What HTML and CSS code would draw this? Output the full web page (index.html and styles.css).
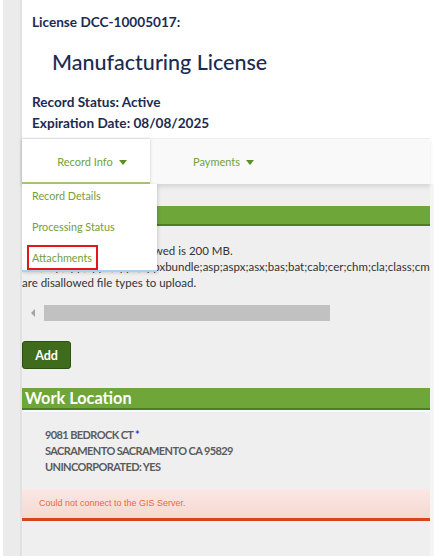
FILE: index.html
```html
<!DOCTYPE html>
<html lang="en">
<head>
<meta charset="utf-8">
<title>Manufacturing License</title>
<link rel="stylesheet" href="styles.css">
</head>
<body>
<div class="page">
  <div class="gutter"></div>
  <div class="main">
    <div class="record-header">
      <div class="license">License DCC-10005017:</div>
      <h1 class="title">Manufacturing License</h1>
      <div class="status">
        <div>Record Status: Active</div>
        <div>Expiration Date: 08/08/2025</div>
      </div>
    </div>
    <nav class="tabs">
      <div class="tab active">Record Info <span class="caret"></span></div>
      <div class="tab">Payments <span class="caret"></span></div>
    </nav>
    <div class="dropdown">
      <div class="dd-item">Record Details</div>
      <div class="dd-item">Processing Status</div>
      <div class="dd-item"><span class="selected">Attachments</span></div>
    </div>
    <div class="content">
      <div class="section-bar"></div>
      <div class="info">
        <div class="line">The maximum file size allowed is 200 MB.</div>
        <div class="line">ade;adp;app;appk;appx;appxbundle;asp;aspx;asx;bas;bat;cab;cer;chm;cla;class;cmd;com;cpl;crt;csh;der;diagcab;exe;fxp;gadget</div>
        <div class="line">are disallowed file types to upload.</div>
      </div>
      <div class="scroller">
        <span class="arrow-left"></span>
        <span class="thumb"></span>
      </div>
      <button class="add-btn" type="button">Add</button>
      <div class="section-bar work">Work Location</div>
      <div class="address">
        <div>9081 BEDROCK CT <span class="req">*</span></div>
        <div>SACRAMENTO SACRAMENTO CA 95829</div>
        <div>UNINCORPORATED: YES</div>
      </div>
      <div class="error">Could not connect to the GIS Server.</div>
    </div>
  </div>
</div>
</body>
</html>
```
FILE: styles.css
```css
html, body {
  margin: 0;
  padding: 0;
  background: #ffffff;
  height: 100%;
}
body {
  font-family: Lato, "Open Sans", sans-serif;
  overflow: hidden;
}
.page {
  display: flex;
  min-height: 556px;
}
.gutter {
  width: 17px;
  margin-left: 3px;
  background: #ebebeb;
  border-right: 2px solid #e1e1e1;
  flex: none;
}
.main {
  flex: 1;
  min-width: 0;
  position: relative;
  display: flex;
  flex-direction: column;
}
.record-header {
  padding: 14px 0 0 10px;
  color: #1b2b52;
}
.license {
  font-size: 13.6px;
  font-weight: 700;
  line-height: 16px;
}
.title {
  margin: 19px 0 0 20px;
  font-size: 21.5px;
  font-weight: 500;
  line-height: 26px;
}
.status {
  margin-top: 17px;
  font-size: 13.6px;
  font-weight: 700;
  line-height: 21px;
}
.tabs {
  margin-top: 4px;
  margin-right: 4px;
  height: 46px;
  background: #f9f9f9;
  border-top: 1px solid #efefef;
  box-sizing: border-box;
  display: flex;
  box-shadow: 0 3px 4px rgba(0, 0, 0, 0.10);
  position: relative;
  z-index: 1;
}
.tab {
  font-size: 11px;
  color: #72a03c;
  display: flex;
  align-items: center;
  gap: 6px;
}
.tab.active {
  width: 128px;
  background: #ffffff;
  justify-content: center;
  box-shadow: 0 0 3px rgba(0, 0, 0, 0.18);
  border-bottom: 2px solid #a4c77a;
  box-sizing: border-box;
  padding-top: 2px;
  padding-left: 12px;
}
.tab + .tab {
  margin-left: 43px;
}
.caret {
  width: 0;
  height: 0;
  border-left: 4px solid transparent;
  border-right: 4px solid transparent;
  border-top: 5px solid #5d8f25;
  margin-top: 1px;
}
.dropdown {
  position: absolute;
  top: 184px;
  left: 0;
  width: 135px;
  height: 88px;
  box-sizing: border-box;
  background: #ffffff;
  border-bottom: 2px solid #a9d1ef;
  box-shadow: 1px 1px 3px rgba(0, 0, 0, 0.15);
  z-index: 5;
  display: flex;
  flex-direction: column;
  gap: 7px;
  padding-left: 5px;
}
.dd-item {
  height: 24px;
  line-height: 24px;
  font-size: 10.8px;
  color: #72a03c;
  padding-left: 5px;
}
.dd-item:last-child {
  padding-left: 0;
}
.selected {
  display: inline-block;
  border: 2px solid #e8141c;
  padding: 0 4px 0 3px;
  line-height: 21px;
  margin-top: -1px;
}
.content {
  flex: 1;
  background: #efefef;
  border-right: 4px solid #f5f5f5;
  padding-top: 22px;
  min-width: 0;
}
.section-bar {
  height: 20px;
  box-sizing: border-box;
  background: #6ea63a;
  border-bottom: 2px solid #4f7d22;
}
.info {
  margin-top: 17px;
  font-size: 11.5px;
  line-height: 16px;
  color: #333333;
  white-space: nowrap;
  overflow: hidden;
}
.scroller {
  margin-top: 11px;
  height: 22px;
  display: flex;
  align-items: center;
}
.arrow-left {
  width: 0;
  height: 0;
  border-top: 4px solid transparent;
  border-bottom: 4px solid transparent;
  border-right: 4px solid #a3a3a3;
  margin-left: 9px;
}
.thumb {
  margin-left: 9px;
  width: 286px;
  height: 16px;
  background: #c1c1c1;
}
.add-btn {
  margin-top: 17px;
  width: 49px;
  height: 28px;
  background: #3f6c1c;
  border: 1px solid #2c4f12;
  border-radius: 3px;
  color: #ffffff;
  font-family: Lato, "Open Sans", sans-serif;
  font-weight: 700;
  font-size: 12.5px;
  padding: 0;
  display: block;
}
.section-bar.work {
  margin-top: 19px;
  height: 22px;
  color: #ffffff;
  font-weight: 700;
  font-size: 16.3px;
  line-height: 20px;
  padding-left: 3px;
  box-shadow: 0 2px 0 #f9f9f9;
}
.address {
  margin-top: 17px;
  padding-left: 23px;
  font-size: 11px;
  line-height: 16px;
  font-weight: 700;
  color: #5b5b5b;
  letter-spacing: -0.6px;
}
.req {
  color: #2f3fe0;
}
.error {
  margin-top: 14px;
  height: 32px;
  box-sizing: border-box;
  background: linear-gradient(#fbe8e4, #f5d8d1);
  border-bottom: 3px solid #d8441c;
  padding-left: 17px;
  font-family: "Liberation Sans", Arial, sans-serif;
  font-size: 9px;
  color: #f0683a;
  line-height: 29px;
}
```
